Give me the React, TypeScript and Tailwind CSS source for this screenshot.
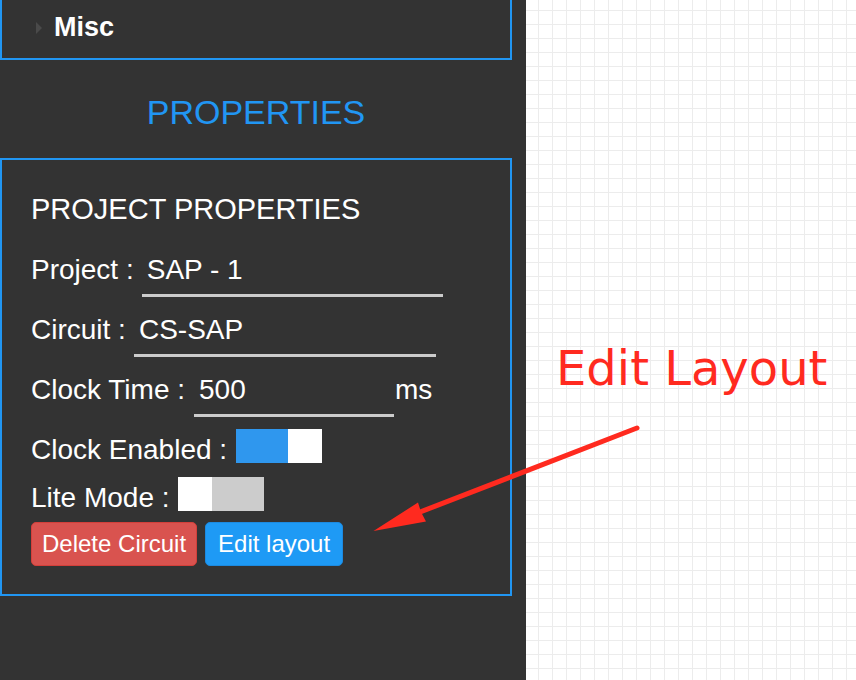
import React from "react";

const sans = "font-['Liberation_Sans',Arial,sans-serif]";

function Toggle({ on }: { on: boolean }) {
  return (
    <div
      className={`flex h-[34px] w-[86px] ${on ? "justify-end bg-[#2f97ee]" : "justify-start bg-[#cccccc]"}`}
    >
      <div className="h-[34px] w-[34px] bg-white" />
    </div>
  );
}

function Field({ label, value, width, gap }: { label: string; value: string; width: string; gap: string }) {
  return (
    <div className="flex items-baseline">
      <span className="text-[28px] text-white">{label}</span>
      <input
        readOnly
        defaultValue={value}
        className={`${gap} ${width} h-[51px] border-0 border-b-[3px] border-[#cccccc] bg-transparent pl-[5px] text-[28px] text-white outline-none`}
      />
    </div>
  );
}

export default function App() {
  return (
    <div className={`relative flex h-[680px] w-[856px] overflow-hidden ${sans}`}>
      {/* sidebar */}
      <div className="flex h-full w-[526px] shrink-0 flex-col bg-[#333333]">
        <div className="h-[60px] w-[512px] border-x-2 border-b-2 border-[#2196f3]">
          <div className="flex items-center pl-[34px] pt-[12px] leading-[31px]">
            <span className="mr-[12px] h-0 w-0 border-y-[6px] border-l-[6px] border-y-transparent border-l-[#4a4a4a]" />
            <span className="text-[27px] font-bold text-white">Misc</span>
          </div>
        </div>

        <h2 className="mt-[32px] mb-[26px] w-[512px] text-center text-[34px] leading-[40px] text-[#2196f3]">
          PROPERTIES
        </h2>

        <div className="w-[512px] border-2 border-[#2196f3] pt-[32px] pb-[28px] pl-[29px]">
          <h3 className="text-[29px] leading-[34px] text-white">PROJECT PROPERTIES</h3>

          <div className="mt-[20px] flex flex-col gap-[9px]">
            <Field label="Project :" value="SAP - 1" width="w-[301px]" gap="ml-[8px]" />
            <Field label="Circuit :" value="CS-SAP" width="w-[302px]" gap="ml-[8px]" />
            <div className="flex items-baseline">
              <span className="text-[28px] text-white">Clock Time :</span>
              <input
                readOnly
                defaultValue="500"
                className="ml-[9px] h-[51px] w-[200px] border-0 border-b-[3px] border-[#cccccc] bg-transparent pl-[5px] text-[28px] text-white outline-none"
              />
              <span className="ml-[1px] text-[28px] text-white">ms</span>
            </div>
          </div>

          <div className="mt-[12px] flex items-end">
            <span className="text-[28px] leading-[26px] text-white">Clock Enabled :</span>
            <div className="ml-[9px]">
              <Toggle on />
            </div>
          </div>

          <div className="mt-[14px] flex items-end">
            <span className="text-[28px] leading-[26px] text-white">Lite Mode :</span>
            <div className="ml-[8px]">
              <Toggle on={false} />
            </div>
          </div>

          <div className="mt-[11px] flex gap-[8px]">
            <button className="h-[44px] rounded-[5px] border border-[#d43f3a] bg-[#d9534f] px-[10px] text-[24px] text-white">
              Delete Circuit
            </button>
            <button className="h-[44px] rounded-[5px] border border-[#1c8ae0] bg-[#1e9af5] px-[12px] text-[24px] text-white">
              Edit layout
            </button>
          </div>
        </div>
      </div>

      {/* canvas */}
      <div className="h-full flex-1 bg-white bg-[linear-gradient(to_right,#ececec_1px,transparent_1px),linear-gradient(to_bottom,#ececec_1px,transparent_1px)] bg-[size:14px_14px] bg-[position:12px_10px]" />

      {/* annotation */}
      <div className="pointer-events-none absolute left-[556px] top-[340px] font-['DejaVu_Sans',sans-serif] text-[48px] leading-[56px] text-[#ff2a1f]">
        Edit Layout
      </div>
      <svg className="pointer-events-none absolute left-0 top-0" width="856" height="680" viewBox="0 0 856 680">
        <line x1="637" y1="428" x2="415" y2="514" stroke="#ff2a1f" strokeWidth="5" strokeLinecap="round" />
        <path d="M373.5 531 L418 502.5 L421 512 L426 521.5 Z" fill="#ff2a1f" />
      </svg>
    </div>
  );
}
